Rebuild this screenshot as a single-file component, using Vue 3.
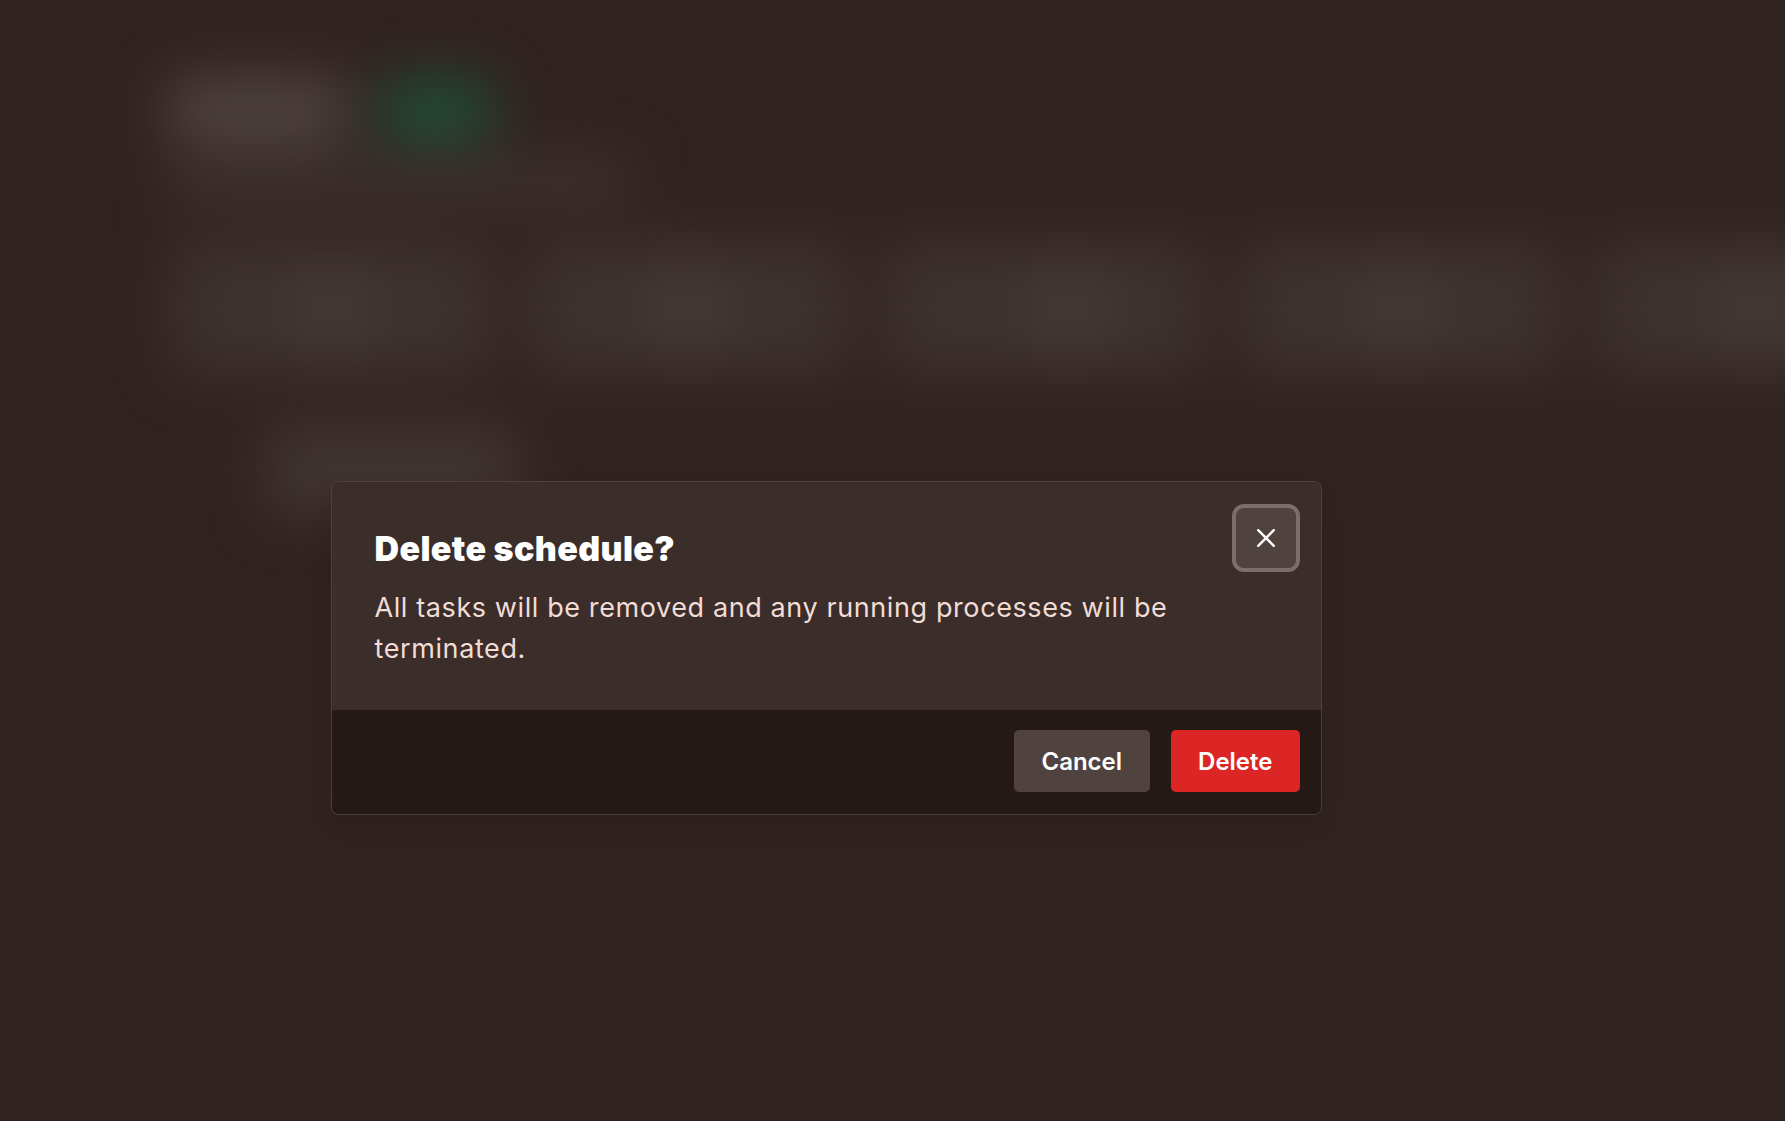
<script setup>
const cards = [0, 1, 2, 3, 4]
</script>

<template>
  <div class="page">
    <div class="backdrop" aria-hidden="true">
      <div class="head">
        <div class="pill"></div>
        <div class="badge"></div>
      </div>
      <div class="subtitle"></div>
      <div class="cards">
        <div v-for="c in cards" :key="c" class="card"><div class="card-mark"></div></div>
      </div>
      <div class="tab"></div>
    </div>

    <div class="overlay">
      <section class="modal" role="dialog">
        <div class="body">
          <button class="close" aria-label="Close">
            <svg width="24" height="24" viewBox="0 0 24 24" fill="none" stroke="#fff" stroke-width="2.4" stroke-linecap="round">
              <path d="M4.2 4.2l15.6 15.6M19.8 4.2L4.2 19.8" />
            </svg>
          </button>
          <h2 class="title">Delete schedule?</h2>
          <p class="text">All tasks will be removed and any running processes will be terminated.</p>
        </div>
        <footer class="footer">
          <button class="btn cancel">Cancel</button>
          <button class="btn delete">Delete</button>
        </footer>
      </section>
    </div>
  </div>
</template>

<style>
html, body { margin: 0; background: #312320; }
</style>

<style scoped>
.page {
  position: relative;
  width: 1785px;
  height: 1121px;
  overflow: hidden;
  background: #312320;
  font-family: Inter, "Liberation Sans", sans-serif;
}
.backdrop {
  box-sizing: border-box;
  height: 100%;
  padding: 80px 0 0 170px;
  filter: blur(28px);
}
.head { display: flex; gap: 30px; }
.pill { width: 176px; height: 60px; background: #524643; border-radius: 8px; }
.badge { width: 120px; height: 60px; background: #1f4f37; border-radius: 30px; }
.subtitle { width: 460px; height: 40px; margin-top: 20px; background: #3f3330; }
.cards { display: flex; gap: 40px; margin: 44px 0 0 4px; width: 1700px; }
.card {
  flex: 0 0 316px;
  height: 128px;
  background: #3e322f;
  display: flex;
  justify-content: center;
  align-items: center;
}
.card:nth-child(3) .card-mark { margin-left: 50px; }
.card-mark { width: 70px; height: 80px; background: #463a37; }
.tab { width: 250px; height: 84px; margin: 56px 0 0 96px; background: #413532; }

.overlay {
  position: absolute;
  inset: 0;
  padding: 481px 0 0 331px;
}
.modal {
  box-sizing: border-box;
  width: 991px;
  height: 334px;
  display: flex;
  flex-direction: column;
  border: 1.5px solid #4d413e;
  border-radius: 8px;
  overflow: hidden;
  background: #3a2d2a;
  box-shadow: 0 12px 24px rgba(0, 0, 0, 0.12);
}
.body {
  position: relative;
  box-sizing: border-box;
  height: 228px;
  padding: 44px 42px 0 42.5px;
}
.close {
  position: absolute;
  top: 22px;
  right: 21px;
  box-sizing: border-box;
  width: 68px;
  height: 68px;
  display: flex;
  align-items: center;
  justify-content: center;
  padding: 0;
  background: #50423f;
  border: 4px solid #7f6d6a;
  border-radius: 12px;
}
.title {
  margin: 0;
  font-size: 34px;
  line-height: 46px;
  font-weight: 900;
  letter-spacing: 0.36px;
  color: #fff;
}
.text {
  margin: 15px 0 0;
  font-size: 27px;
  line-height: 41px;
  letter-spacing: 0.6px;
  color: #f2dcd6;
}
.footer {
  flex: 1;
  display: flex;
  justify-content: flex-end;
  align-items: flex-start;
  gap: 21px;
  padding: 20px 21px 0;
  background: #241915;
}
.btn {
  height: 62px;
  padding: 0 27.5px;
  border: 0;
  border-radius: 5px;
  font-family: inherit;
  font-size: 24px;
  font-weight: 600;
  color: #fff;
}
.cancel { background: #50423f; }
.delete { background: #dc2626; }
</style>
